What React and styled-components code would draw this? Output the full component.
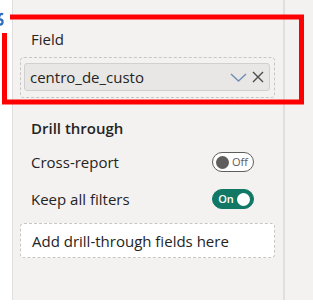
import React from "react";
import styled, { createGlobalStyle } from "styled-components";

const Global = createGlobalStyle`
  html, body {
    margin: 0;
    padding: 0;
    background: #ffffff;
  }
  body {
    font-family: "Segoe UI", "Open Sans", "Noto Sans", sans-serif;
    color: #252423;
  }
`;

const Page = styled.div`
  position: relative;
  width: 313px;
  height: 306px;
  overflow: hidden;
`;

const Frame = styled.div`
  display: flex;
  height: 300px;
`;

const LeftStrip = styled.div`
  width: 12px;
  background: #ffffff;
  border-right: 1px solid #e1dfdd;
`;

const Panel = styled.div`
  width: 255px;
  padding: 0 8px 0 7px;
  background: #f3f2f1;
  border-right: 2px solid #e1dfdd;
  display: flex;
  flex-direction: column;
`;

const RightStrip = styled.div`
  flex: 1;
  background: #f3f2f1;
`;

const Label = styled.div`
  margin-top: ${(p) => p.$top || 0}px;
  padding-left: 11px;
  font-size: 15px;
  line-height: 18px;
  font-weight: ${(p) => (p.$bold ? 600 : 400)};
`;

const DropZone = styled.div`
  margin-top: ${(p) => p.$top || 0}px;
  height: ${(p) => p.$h}px;
  box-sizing: border-box;
  border: 1px dashed #c8c6c4;
  border-radius: 4px;
  background: ${(p) => p.$bg || "transparent"};
  padding: ${(p) => p.$pad || "0"};
  display: flex;
  align-items: center;
`;

const Pill = styled.div`
  flex: 1;
  height: 28px;
  box-sizing: border-box;
  border: 1px solid #d2d0ce;
  border-radius: 3px;
  background: #e8e7e6;
  display: flex;
  align-items: center;
  padding: 0 5px 0 5px;
  font-size: 15px;
`;

const PillText = styled.span`
  flex: 1;
`;

const IconBox = styled.span`
  display: flex;
  align-items: center;
  margin-left: ${(p) => p.$gap || 0}px;
`;

const Row = styled.div`
  margin-top: ${(p) => p.$top || 0}px;
  height: 20px;
  display: flex;
  align-items: center;
  justify-content: space-between;
  padding: 0 21px 0 11px;
  font-size: 15px;
`;

const Toggle = styled.div`
  width: 42px;
  height: 20px;
  box-sizing: border-box;
  border-radius: 10px;
  border: 1px solid ${(p) => (p.$on ? "#117865" : "#605e5c")};
  background: ${(p) => (p.$on ? "#117865" : "#ffffff")};
  display: flex;
  align-items: center;
  flex-direction: ${(p) => (p.$on ? "row-reverse" : "row")};
  justify-content: flex-end;
  padding: 0 3px;
  gap: 1px;
  font-size: 11px;
  font-weight: ${(p) => (p.$on ? 600 : 400)};
  color: ${(p) => (p.$on ? "#ffffff" : "#605e5c")};
`;

const Knob = styled.span`
  width: 13px;
  height: 13px;
  border-radius: 50%;
  background: ${(p) => (p.$on ? "#ffffff" : "#605e5c")};
  flex-shrink: 0;
`;

const ToggleText = styled.span`
  flex: 1;
  text-align: center;
  line-height: 14px;
`;

const AddText = styled.span`
  padding-left: 11px;
  font-size: 15px;
`;

const Overlay = styled.svg`
  position: absolute;
  left: 0;
  top: 0;
  pointer-events: none;
`;

export default function App() {
  return (
    <Page>
      <Global />
      <Frame>
        <LeftStrip />
        <Panel>
          <Label $top={30}>Field</Label>
          <DropZone $top={9} $h={41} $pad="5px 4px 6px 3px">
            <Pill>
              <PillText>centro_de_custo</PillText>
              <IconBox>
                <svg width="17" height="9" viewBox="0 0 17 9">
                  <path d="M1 1 L8.5 8 L16 1" fill="none" stroke="#6f8fb3" strokeWidth="1.4" />
                </svg>
              </IconBox>
              <IconBox $gap={5}>
                <svg width="12" height="12" viewBox="0 0 12 12">
                  <path d="M1 1 L11 11 M11 1 L1 11" fill="none" stroke="#4d4b49" strokeWidth="1.4" />
                </svg>
              </IconBox>
            </Pill>
          </DropZone>
          <Label $top={21} $bold>Drill through</Label>
          <Row $top={15}>
            <span>Cross-report</span>
            <Toggle>
              <Knob />
              <ToggleText>Off</ToggleText>
            </Toggle>
          </Row>
          <Row $top={17}>
            <span>Keep all filters</span>
            <Toggle $on>
              <Knob $on />
              <ToggleText>On</ToggleText>
            </Toggle>
          </Row>
          <DropZone $top={14} $h={35} $bg="#ffffff">
            <AddText>Add drill-through fields here</AddText>
          </DropZone>
        </Panel>
        <RightStrip />
      </Frame>
      <Overlay width="313" height="306" viewBox="0 0 313 306">
        <path
          d="M10 17 L301.5 17 L301.5 102 L4.5 102 L4.5 33"
          fill="none"
          stroke="#ff0000"
          strokeWidth="5"
        />
        <path d="M3 14.5 C1 13 -1 14.5 -1 19" fill="none" stroke="#2f6cc0" strokeWidth="2.2" />
        <circle cx="0" cy="22" r="2.6" fill="none" stroke="#2f6cc0" strokeWidth="2.2" />
      </Overlay>
    </Page>
  );
}
